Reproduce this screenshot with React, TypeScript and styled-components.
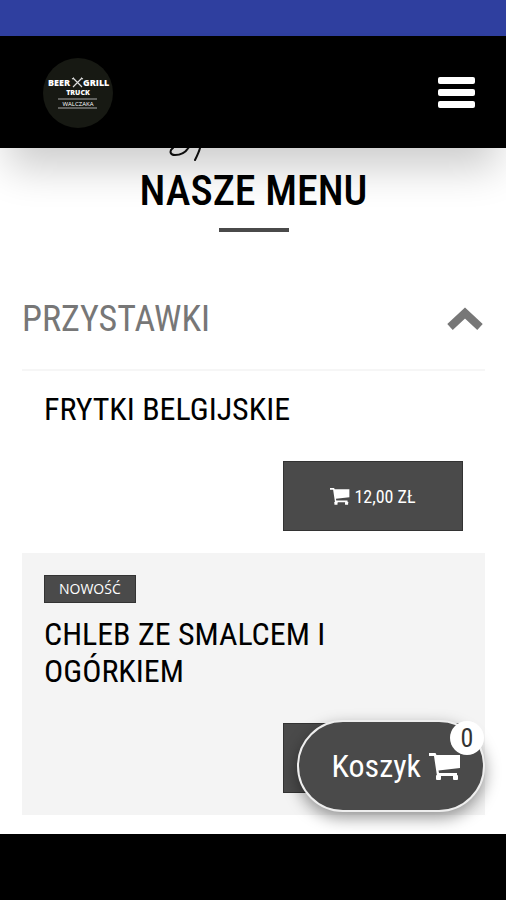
import React from "react";
import styled, { createGlobalStyle } from "styled-components";

const GlobalStyle = createGlobalStyle`
  *, *::before, *::after { box-sizing: border-box; }
  body {
    margin: 0;
    background: #fff;
    color: #000;
    font-family: "Roboto Condensed", "Liberation Sans Narrow", "Noto Sans", sans-serif;
  }
  button { font-family: inherit; cursor: pointer; }
`;

const Screen = styled.div`
  display: flex;
  flex-direction: column;
  min-height: 100vh;
`;

const StatusBar = styled.div`
  height: 36px;
  background: #2f3f9f;
`;

const Header = styled.header`
  position: relative;
  z-index: 2;
  display: flex;
  align-items: center;
  justify-content: space-between;
  height: 112px;
  padding: 0 22px 0 42px;
  background: #000;
  box-shadow: 0 28px 40px -8px rgba(0, 0, 0, 0.2);
`;

const LogoLink = styled.a`
  display: block;
  height: 72px;
`;

const IconButton = styled.button`
  display: flex;
  padding: 8px;
  border: 0;
  background: none;
`;

const Main = styled.main`
  position: relative;
  flex: 1;
  padding: 0 21px 18px 22px;
`;

const Intro = styled.div`
  display: flex;
  flex-direction: column;
  align-items: center;
`;

const Flourish = styled.svg`
  align-self: flex-start;
  margin-left: 144px;
`;

const Title = styled.h1`
  margin: 0;
  padding-top: 2px;
  font-size: 42px;
  line-height: 50px;
  font-weight: 500;
`;

const Rule = styled.div`
  width: 70px;
  height: 4px;
  margin-top: 12px;
  background: #4a4a4a;
`;

const CategoryToggle = styled.button`
  display: flex;
  align-items: center;
  justify-content: space-between;
  width: 100%;
  height: 104px;
  margin-top: 35px;
  padding: 2px 0 0;
  border: 0;
  border-bottom: 2px solid #f6f6f6;
  background: none;
  color: #777;
  font-size: 36px;
`;

const Item = styled.article<{ $shaded?: boolean }>`
  display: flex;
  flex-direction: column;
  align-items: flex-start;
  padding: 20px 22px 22px;
  background: ${(p) => (p.$shaded ? "#f4f4f4" : "#fff")};
`;

const Tag = styled.span`
  padding: 0 14px;
  margin: 2px 0 13px;
  background: #4a4a4a;
  border: 1px solid #333;
  color: #fff;
  font-family: "Open Sans", sans-serif;
  font-size: 14px;
  line-height: 26px;
`;

const ItemName = styled.h2`
  margin: 0;
  font-size: 32px;
  line-height: 37px;
  font-weight: 400;
`;

const PriceButton = styled.button`
  display: flex;
  align-items: center;
  justify-content: center;
  gap: 4px;
  align-self: flex-end;
  width: 180px;
  height: 70px;
  margin-top: 33px;
  border: 1px solid #333;
  background: #4a4a4a;
  color: #fff;
  font-size: 18px;
`;

const BasketButton = styled.button`
  position: absolute;
  right: 21px;
  bottom: 22px;
  display: flex;
  align-items: center;
  gap: 8px;
  height: 92px;
  padding: 0 22px 0 33px;
  border: 2px solid #eee;
  border-radius: 46px;
  background: #4a4a4a;
  color: #fff;
  font-size: 32px;
  box-shadow: 0 6px 16px rgba(0, 0, 0, 0.4);
`;

const Count = styled.span`
  position: absolute;
  top: -1px;
  right: -1px;
  width: 34px;
  height: 34px;
  border-radius: 50%;
  background: #fff;
  color: #333;
  font-size: 26px;
  line-height: 34px;
`;

const BottomBar = styled.footer`
  height: 66px;
  background: #000;
`;

const Cart = ({ size }: { size: number }) => (
  <svg width={size} height={size} viewBox="0 0 32 32" fill="currentColor" aria-hidden="true">
    <path d="M0 3h6.500l1 2H31v13L9.500 20.500l.5 2.500h18v3H8L5 6H0z" />
    <rect x="7" y="25" width="5" height="5" rx="1" />
    <rect x="24" y="25" width="5" height="5" rx="1" />
  </svg>
);

const Logo = () => (
  <svg width="72" height="72" viewBox="0 0 72 72" role="img" aria-label="Beer Grill Truck">
    <circle cx="36" cy="37" r="35" fill="#171913" />
    <g fill="#fff" fontFamily="Open Sans, sans-serif" fontWeight="800">
      <text x="6" y="30" fontSize="9">BEER</text>
      <text x="41" y="30" fontSize="9">GRILL</text>
      <text x="36" y="39" fontSize="7" textAnchor="middle">TRUCK</text>
      <text x="36" y="50" fontSize="6" fontWeight="400" textAnchor="middle">WALCZAKA</text>
    </g>
    <path d="M31 22l9 9M40 22l-9 9M30 23l2-1M39 22l2 1" stroke="#ddd" strokeWidth="1.200" fill="none" />
    <path d="M16 43h39M16 52h39" stroke="#aaa" strokeWidth="1" />
  </svg>
);

export default function App() {
  return (
    <>
      <GlobalStyle />
      <Screen>
        <StatusBar />
        <Header>
          <LogoLink href="#"><Logo /></LogoLink>
          <IconButton aria-label="Menu">
            <svg width="38" height="32" viewBox="0 0 38 32" fill="#fff">
              <rect x="0" y="1" width="37" height="7" rx="2" />
              <rect x="0" y="13" width="37" height="7" rx="2" />
              <rect x="0" y="25" width="37" height="7" rx="2" />
            </svg>
          </IconButton>
        </Header>
        <Main>
          <Intro>
            <Flourish width="40" height="16" viewBox="0 0 40 16" fill="none" stroke="#111" strokeLinecap="round" aria-hidden="true">
              <path d="M7 0C3 3 4 7 9 7c6 0 11-3 14-8" strokeWidth="2" />
              <path d="M34 0c-1 4-3 8-5 12" strokeWidth="2" />
            </Flourish>
            <Title>NASZE MENU</Title>
            <Rule />
          </Intro>
          <CategoryToggle aria-expanded="true">
            PRZYSTAWKI
            <svg width="40" height="28" viewBox="0 0 40 28" fill="none" stroke="#777" strokeWidth="8" aria-hidden="true">
              <path d="M5 22L20 8l15 14" />
            </svg>
          </CategoryToggle>
          <Item>
            <ItemName>FRYTKI BELGIJSKIE</ItemName>
            <PriceButton><Cart size={20} />12,00 ZŁ</PriceButton>
          </Item>
          <Item $shaded>
            <Tag>NOWOŚĆ</Tag>
            <ItemName>CHLEB ZE SMALCEM I OGÓRKIEM</ItemName>
            <PriceButton aria-label="Do koszyka" />
          </Item>
          <BasketButton>
            Koszyk
            <Cart size={32} />
            <Count>0</Count>
          </BasketButton>
        </Main>
        <BottomBar />
      </Screen>
    </>
  );
}
